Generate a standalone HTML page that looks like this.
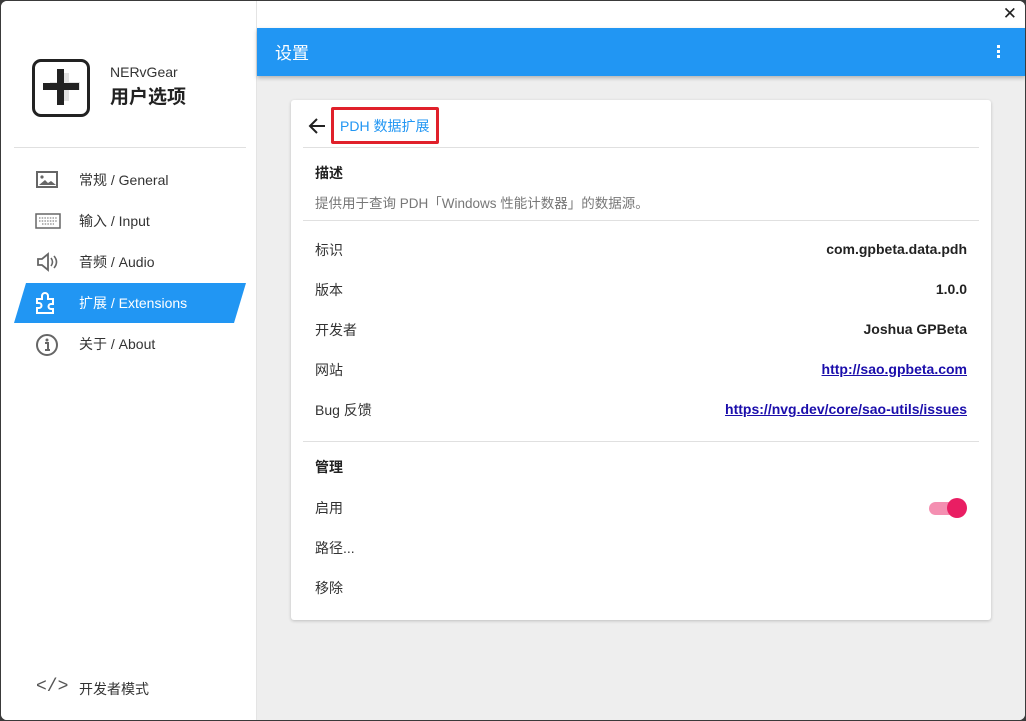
<!DOCTYPE html>
<html><head><meta charset="utf-8"><style>
*{margin:0;padding:0;box-sizing:border-box}
body{width:1026px;height:721px;overflow:hidden;background:#3a3a3a;font-family:"Liberation Sans","Noto Sans CJK SC",sans-serif;position:relative}
.win{position:absolute;left:1px;top:1px;width:1024px;height:719px;background:#fff;border-radius:6px;overflow:hidden}
.side{position:absolute;left:0;top:0;width:256px;height:719px;background:#fff;border-right:1px solid #e4e4e4}
.main{position:absolute;left:256px;top:0;right:0;bottom:0;background:#eeeeee}
.abs{position:absolute}
.item{position:absolute;left:78px;font-size:14px;color:#333}
.ic{position:absolute;left:34px}
.hdr{position:absolute;left:0;right:0;top:27px;height:48px;background:#2196f3;box-shadow:0 2px 4px rgba(0,0,0,.25)}
.card{position:absolute;left:34px;top:99px;width:700px;height:520px;background:#fff;border-radius:3px;box-shadow:0 1px 3px rgba(0,0,0,.2)}
.lbl{position:absolute;left:24px;font-size:14px;color:#333}
.val{position:absolute;right:24px;font-size:14px;color:#222;font-weight:bold}
.lnk{position:absolute;right:24px;font-size:14px;color:#1a0dab;text-decoration:underline;font-weight:bold}
.hr{position:absolute;left:12px;right:12px;height:1px;background:#e0e0e0}
</style></head><body>
<div class="win">
<div class="side">
  <div class="abs" style="left:31px;top:58px;width:58px;height:58px;border:3px solid #222;border-radius:9px"></div>
  <div class="abs" style="left:49px;top:81px;width:30px;height:8px;background:#e2e2e2"></div>
  <div class="abs" style="left:60px;top:72px;width:8px;height:28px;background:#e2e2e2"></div>
  <div class="abs" style="left:42px;top:82px;width:36px;height:7px;background:#222"></div>
  <div class="abs" style="left:56px;top:68px;width:7px;height:36px;background:#222"></div>
  <div class="abs" style="left:109px;top:63px;font-size:14px;color:#333">NERvGear</div>
  <div class="abs" style="left:109px;top:81px;font-size:19px;color:#222;font-weight:bold">用户选项</div>
  <div class="abs" style="left:13px;top:146px;width:232px;height:1px;background:#e0e0e0"></div>
  <svg class="ic" style="top:169px" width="24" height="20" viewBox="0 0 24 20"><rect x="2" y="2" width="20" height="15" fill="none" stroke="#666" stroke-width="2"/><circle cx="7" cy="7" r="1.6" fill="#666"/><path d="M4 15l6-5 3 3 3-2 5 4z" fill="#666"/></svg>
  <div class="item" style="top:169px">常规 / General</div>
  <svg class="ic" style="top:210px" width="26" height="20" viewBox="0 0 26 20"><rect x="1" y="3" width="24" height="14" fill="none" stroke="#666" stroke-width="1.5"/><path d="M4 7h18M4 10h18M7 13h12" stroke="#888" stroke-width="1.3" stroke-dasharray="1.5 1.2"/></svg>
  <div class="item" style="top:210px">输入 / Input</div>
  <svg class="ic" style="top:251px" width="24" height="20" viewBox="0 0 24 20"><path d="M3 7h4l6-5v16l-6-5H3z" fill="none" stroke="#666" stroke-width="1.8"/><path d="M16 6q3 4 0 8M19 4q5 6 0 12" fill="none" stroke="#666" stroke-width="1.6"/></svg>
  <div class="item" style="top:251px">音频 / Audio</div>
  <div class="abs" style="left:13px;top:282px;width:232px;height:40px;background:#2196f3;clip-path:polygon(12px 0,100% 0,calc(100% - 12px) 100%,0 100%)"></div>
  <svg class="ic" style="top:290px" width="26" height="24" viewBox="0 0 26 24"><path d="M2 8h5V5a3 3 0 016 0v3h5v5h-2a2.5 2.5 0 000 5h2v4H2v-5h2a2.5 2.5 0 000-5H2z" fill="none" stroke="#fff" stroke-width="2"/></svg>
  <div class="item" style="top:292px;color:#fff">扩展 / Extensions</div>
  <svg class="ic" style="top:332px" width="24" height="24" viewBox="0 0 24 24"><circle cx="12" cy="12" r="10" fill="none" stroke="#666" stroke-width="2"/><circle cx="12" cy="7" r="1.5" fill="#666"/><path d="M10 10h3v7h2M10 17h5" stroke="#666" stroke-width="2" fill="none"/></svg>
  <div class="item" style="top:333px">关于 / About</div>
  <div class="abs" style="left:35px;top:676px;font-size:18px;color:#555;font-family:'Liberation Mono',monospace">&lt;/&gt;</div>
  <div class="item" style="top:678px">开发者模式</div>
</div>
<div class="main">
  <div class="abs" style="left:0;right:0;top:0;height:27px;background:#fff"></div>
  <div class="abs" style="right:8px;top:3px;font-size:17px;color:#222">✕</div>
  <div class="hdr"><div class="abs" style="left:18px;top:11px;font-size:17px;color:#fff">设置</div>
    <div class="abs" style="right:25px;top:17px;width:3px;height:3px;background:#fff;box-shadow:0 5px 0 #fff,0 10px 0 #fff"></div></div>
  <div class="card">
    <svg class="abs" style="left:16px;top:16px" width="20" height="20" viewBox="0 0 20 20"><path d="M18 10H3M10 3L3 10l7 7" fill="none" stroke="#222" stroke-width="2"/></svg>
    <div class="abs" style="left:40px;top:7px;width:108px;height:37px;border:3px solid #e0202a;border-radius:2px"></div>
    <div class="abs" style="left:49px;top:16px;font-size:14px;color:#2196f3">PDH 数据扩展</div>
    <div class="hr" style="top:47px"></div>
    <div class="lbl" style="top:63px;font-weight:bold;color:#222">描述</div>
    <div class="lbl" style="top:92px;color:#777;font-size:13.5px">提供用于查询 PDH「Windows 性能计数器」的数据源。</div>
    <div class="hr" style="top:120px"></div>
    <div class="lbl" style="top:140px">标识</div><div class="val" style="top:141px">com.gpbeta.data.pdh</div>
    <div class="lbl" style="top:180px">版本</div><div class="val" style="top:181px">1.0.0</div>
    <div class="lbl" style="top:220px">开发者</div><div class="val" style="top:221px">Joshua GPBeta</div>
    <div class="lbl" style="top:260px">网站</div><div class="lnk" style="top:261px">http://sao.gpbeta.com</div>
    <div class="lbl" style="top:300px">Bug 反馈</div><div class="lnk" style="top:301px">https://nvg.dev/core/sao-utils/issues</div>
    <div class="hr" style="top:341px"></div>
    <div class="lbl" style="top:357px;font-weight:bold;color:#222">管理</div>
    <div class="lbl" style="top:398px">启用</div>
    <div class="abs" style="left:638px;top:402px;width:34px;height:13px;border-radius:7px;background:#f48fb1"></div>
    <div class="abs" style="left:656px;top:398px;width:20px;height:20px;border-radius:50%;background:#e91e63"></div>
    <div class="lbl" style="top:438px">路径...</div>
    <div class="lbl" style="top:478px">移除</div>
  </div>
</div>
</div>
</body></html>
